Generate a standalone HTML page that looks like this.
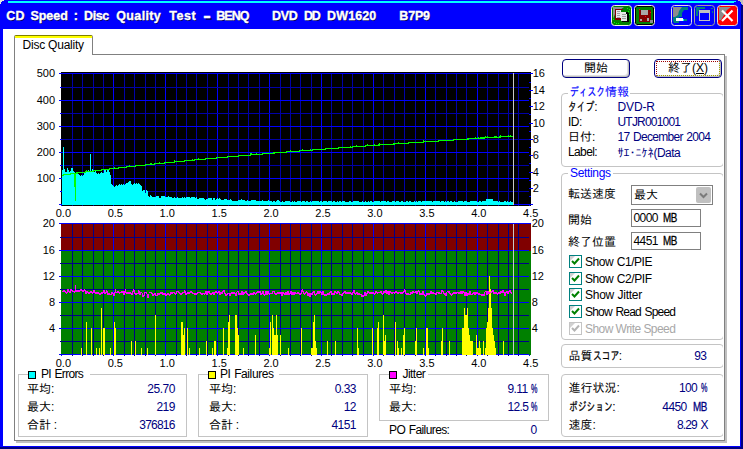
<!DOCTYPE html>
<html lang="ja"><head><meta charset="utf-8"><title>CD Speed : Disc Quality Test</title>
<style>
html,body{margin:0;padding:0}
body{width:743px;height:449px;position:relative;overflow:hidden;background:#fff;
 font-family:"Liberation Sans","IPAGothic","Noto Sans CJK JP",sans-serif;font-size:12px;color:#000;line-height:14px}
.t,.v{letter-spacing:-0.55px}
.j,.k,.h{letter-spacing:0}
.abs,.t,.ax,.tw,.box,.gb,.v,.l{position:absolute}
.t,.ax,.tw,.v,.l{white-space:nowrap}
.j{font-size:12px}
.k{font-size:12px;display:inline-block;transform:scaleX(.73);transform-origin:0 50%;-webkit-text-stroke:0.25px currentColor}
.ax{font-size:11px;line-height:14px;height:14px}
.r{text-align:right}
.c{text-align:center}
.tw{top:8px;color:#fff;font-weight:bold;font-size:12.5px;line-height:16px;text-shadow:1px 1px 0 #00006a;-webkit-text-stroke:0.35px #fff}
.gb{border:1px solid #c4c4c4;border-radius:4px;box-sizing:border-box}
.lg{position:absolute;background:#fff;line-height:14px;white-space:nowrap}
.v{color:#000080;text-align:right}
.bl{color:#00f}
.nv{color:#000080}

.btn{position:absolute;width:68px;height:19px;box-sizing:border-box;border:1px solid #000080;border-radius:4px;background:#fff;
 box-shadow:inset -1px -1px 0 #c0c0c0, inset -2px -2px 0 #e0e0e0;text-align:center;line-height:17px;white-space:nowrap}
.foc{position:absolute;left:1px;top:1px;right:1px;bottom:1px;border:1px dotted #a00000;border-bottom-color:#a0a000;border-right-color:#a0a000}
.ed{position:absolute;box-sizing:border-box;border:1px solid #808080;background:#fff}
.dd{position:absolute;width:15px;height:16px;background:#c0c0c0;border-radius:2px}
.cb{position:absolute;width:13px;height:13px;box-sizing:border-box;border:1px solid #008080;background:#fff}
.cb svg{display:block}
.n{display:inline-block;transform-origin:0 50%;-webkit-text-stroke:0.3px currentColor}
.h{font-family:"IPAGothic","Noto Sans CJK JP",sans-serif;font-size:12px}

</style></head><body>
<!-- window frame -->
<div class="abs" style="left:0;top:0;width:743px;height:29px;background:#00f"></div>
<div class="abs" style="left:8px;top:1px;width:728px;height:1px;background:#0ff"></div><div class="abs" style="left:8px;top:2px;width:726px;height:1px;background:#0ff"></div>
<div class="abs" style="left:0;top:0;width:3px;height:449px;background:#00f"></div>
<div class="abs" style="left:740px;top:0;width:3px;height:449px;background:#00f"></div>
<div class="abs" style="left:741px;top:5px;width:2px;height:444px;background:#000080"></div>
<div class="abs" style="left:0;top:446px;width:741px;height:1px;background:#00f"></div>
<div class="abs" style="left:0;top:447px;width:743px;height:2px;background:#000080"></div>
<svg class="abs" style="left:0;top:0" width="743" height="6" shape-rendering="crispEdges"><path d="M0 0h4v1h-2v1h-1v2h-1z" fill="#e8e8e0"/><path d="M738 0h5v5h-1v-1h-1v-2h-1v-1h-2z" fill="#c0c0c0"/></svg>
<div class="tw" style="left:0"><span style="margin-left:6.20px;letter-spacing:0.25px">CD</span> <span style="margin-left:2.28px;letter-spacing:-0.05px">Speed</span> <span style="margin-left:2.55px;letter-spacing:0.00px">:</span> <span style="margin-left:2.60px;letter-spacing:-0.40px">Disc</span> <span style="margin-left:3.93px;letter-spacing:0.35px">Quality</span> <span style="margin-left:4.67px;letter-spacing:0.54px">Test</span> <span style="margin-left:5.60px;letter-spacing:0.00px"><span style="display:inline-block;transform:scale(1.8,1.3)">-</span></span> <span style="margin-left:3.35px;letter-spacing:-0.97px">BENQ</span> <span style="margin-left:20.10px;letter-spacing:-0.40px">DVD</span> <span style="margin-left:3.32px;letter-spacing:-1.45px">DD</span> <span style="margin-left:4.38px;letter-spacing:0.11px">DW1620</span> <span style="margin-left:19.41px;letter-spacing:-0.16px">B7P9</span></div>
<svg class="abs" style="left:608px;top:3px" width="132" height="25" viewBox="0 0 132 25"><rect x="3.5" y="2.5" width="20" height="20" fill="#008000" rx="3" stroke="#f4f4e8" stroke-width="1"/><path d="M5 4h11l-4 3h-3l-2 4l-2 5z" fill="#909090"/><rect x="7" y="6" width="6" height="11" fill="#800000" /><rect x="8" y="7" width="5" height="8" fill="#e8e8e8" /><rect x="9" y="8" width="3" height="1" fill="#a0a0a0" /><rect x="9" y="10" width="3" height="1" fill="#a0a0a0" /><rect x="9" y="12" width="3" height="1" fill="#a0a0a0" /><rect x="9" y="14" width="3" height="1" fill="#a0a0a0" /><rect x="12" y="6" width="3" height="1" fill="#800000" /><rect x="14" y="10" width="7" height="9" fill="#000" /><rect x="13" y="9" width="6" height="9" fill="#e8e8e8" /><rect x="18" y="9" width="2" height="2" fill="#000" /><rect x="14" y="11" width="4" height="1" fill="#a0a0a0" /><rect x="14" y="13" width="4" height="1" fill="#a0a0a0" /><rect x="14" y="15" width="4" height="1" fill="#a0a0a0" /><rect x="19" y="5" width="1" height="1" fill="#00ff00" /><rect x="21" y="6" width="1" height="1" fill="#00ff00" /><rect x="20" y="8" width="1" height="1" fill="#00ff00" /><rect x="21" y="11" width="1" height="1" fill="#00ff00" /><rect x="5" y="16" width="1" height="1" fill="#00ff00" /><rect x="6" y="19" width="1" height="1" fill="#00ff00" /><rect x="8" y="20" width="1" height="1" fill="#00ff00" /><rect x="10" y="20" width="1" height="1" fill="#00ff00" /><rect x="26.5" y="2.5" width="20" height="20" fill="#000" rx="3" stroke="#f4f4e8" stroke-width="1"/><rect x="28" y="4" width="17" height="17" fill="#008000" rx="1"/><rect x="31" y="7" width="12" height="12" fill="#800000" /><rect x="33" y="7" width="7" height="5" fill="#a8a8a8" /><rect x="32" y="16" width="2" height="2" fill="#a8a8a8" /><rect x="39" y="15" width="2" height="3" fill="#a8a8a8" /><rect x="42" y="17" width="3" height="3" fill="#909090" /><rect x="31" y="6" width="1" height="1" fill="#ff0000" /><rect x="37" y="13" width="1" height="1" fill="#ff0000" /><rect x="42" y="9" width="1" height="1" fill="#ff0000" /><rect x="63.5" y="2.5" width="20" height="20" fill="#0000ff" rx="3" stroke="#e0e0e0" stroke-width="1"/><path d="M65 4h15v3h-4l-2 3v4h-3v6h-5l-1 -2z" fill="#008080"/><path d="M65 4h9l-3 4l-1 4l-3 2h-2z" fill="#8c8c8c"/><rect x="76" y="16" width="3" height="2" fill="#008080" /><rect x="68" y="15" width="7" height="3" fill="#ffffff" /><rect x="75" y="16" width="1" height="2" fill="#00ffff" /><rect x="86.5" y="2.5" width="20" height="20" fill="#0000ff" rx="3" stroke="#a0a0a0" stroke-width="1"/><path d="M88 4h9v2h-5l-2 3v4h-2z" fill="#008080"/><rect x="103" y="5" width="2" height="1" fill="#008080" /><rect x="104" y="8" width="1" height="2" fill="#008080" /><rect x="91" y="7" width="11" height="3" fill="#c0c0c0" /><rect x="91" y="7" width="1" height="11" fill="#c0c0c0" /><rect x="101" y="7" width="1" height="11" fill="#c0c0c0" /><rect x="91" y="17" width="11" height="1" fill="#c0c0c0" /><rect x="109.5" y="2.5" width="20" height="20" fill="#ff0000" rx="3" stroke="#e0e0e0" stroke-width="1"/><path d="M111 4h12l-4 3l-3 5l-3 5h-2z" fill="#8c8c8c"/><path d="M114 7.5l10.5 10.5M124.5 7.5l-10.5 10.5" stroke="#fff" stroke-width="2.2" fill="none"/></svg>
<!-- tab page -->
<div class="abs" style="left:14px;top:54px;width:711px;height:387px;border:1px solid #808080;box-sizing:border-box;box-shadow:2px 2px 0 #c0c0c0"></div>
<div class="abs" style="left:14px;top:35px;width:79px;height:20px;border:1px solid #808080;border-bottom:none;border-top:1px solid #808000;box-sizing:border-box;background:#fff;border-radius:2px 2px 0 0"></div>
<div class="abs" style="left:15px;top:36px;width:77px;height:2px;background:#ff0"></div>
<div class="t" style="left:22.5px;top:38px;letter-spacing:-0.22px">Disc Quality</div>
<svg class="abs" style="left:0;top:0" width="743" height="449" shape-rendering="crispEdges"><rect x="61" y="72" width="470" height="134" fill="#000"/><rect x="72" y="73" width="1" height="132" fill="#0000a8"/><rect x="82" y="73" width="1" height="132" fill="#0000a8"/><rect x="93" y="73" width="1" height="132" fill="#0000a8"/><rect x="103" y="73" width="1" height="132" fill="#0000a8"/><rect x="113" y="73" width="1" height="132" fill="#00f"/><rect x="124" y="73" width="1" height="132" fill="#0000a8"/><rect x="134" y="73" width="1" height="132" fill="#0000a8"/><rect x="145" y="73" width="1" height="132" fill="#0000a8"/><rect x="155" y="73" width="1" height="132" fill="#0000a8"/><rect x="165" y="73" width="1" height="132" fill="#00f"/><rect x="176" y="73" width="1" height="132" fill="#0000a8"/><rect x="186" y="73" width="1" height="132" fill="#0000a8"/><rect x="196" y="73" width="1" height="132" fill="#0000a8"/><rect x="207" y="73" width="1" height="132" fill="#0000a8"/><rect x="217" y="73" width="1" height="132" fill="#00f"/><rect x="228" y="73" width="1" height="132" fill="#0000a8"/><rect x="238" y="73" width="1" height="132" fill="#0000a8"/><rect x="248" y="73" width="1" height="132" fill="#0000a8"/><rect x="259" y="73" width="1" height="132" fill="#0000a8"/><rect x="269" y="73" width="1" height="132" fill="#00f"/><rect x="280" y="73" width="1" height="132" fill="#0000a8"/><rect x="290" y="73" width="1" height="132" fill="#0000a8"/><rect x="300" y="73" width="1" height="132" fill="#0000a8"/><rect x="311" y="73" width="1" height="132" fill="#0000a8"/><rect x="321" y="73" width="1" height="132" fill="#00f"/><rect x="331" y="73" width="1" height="132" fill="#0000a8"/><rect x="342" y="73" width="1" height="132" fill="#0000a8"/><rect x="352" y="73" width="1" height="132" fill="#0000a8"/><rect x="363" y="73" width="1" height="132" fill="#0000a8"/><rect x="373" y="73" width="1" height="132" fill="#00f"/><rect x="383" y="73" width="1" height="132" fill="#0000a8"/><rect x="394" y="73" width="1" height="132" fill="#0000a8"/><rect x="404" y="73" width="1" height="132" fill="#0000a8"/><rect x="415" y="73" width="1" height="132" fill="#0000a8"/><rect x="425" y="73" width="1" height="132" fill="#00f"/><rect x="435" y="73" width="1" height="132" fill="#0000a8"/><rect x="446" y="73" width="1" height="132" fill="#0000a8"/><rect x="456" y="73" width="1" height="132" fill="#0000a8"/><rect x="466" y="73" width="1" height="132" fill="#0000a8"/><rect x="477" y="73" width="1" height="132" fill="#00f"/><rect x="487" y="73" width="1" height="132" fill="#0000a8"/><rect x="498" y="73" width="1" height="132" fill="#0000a8"/><rect x="508" y="73" width="1" height="132" fill="#0000a8"/><rect x="518" y="73" width="1" height="132" fill="#0000a8"/><rect x="62" y="73" width="469" height="1" fill="#00f"/><rect x="62" y="87" width="467" height="1" fill="#0000a8"/><rect x="62" y="100" width="467" height="1" fill="#00f"/><rect x="62" y="113" width="467" height="1" fill="#0000a8"/><rect x="62" y="126" width="467" height="1" fill="#00f"/><rect x="62" y="139" width="467" height="1" fill="#0000a8"/><rect x="62" y="152" width="467" height="1" fill="#00f"/><rect x="62" y="165" width="467" height="1" fill="#0000a8"/><rect x="62" y="178" width="467" height="1" fill="#00f"/><rect x="62" y="191" width="467" height="1" fill="#0000a8"/><rect x="62" y="204" width="469" height="1" fill="#00f"/><path d="M62 205V170H63V147H64V169H65V172H66V172H67V168H68V170H69V172H70V171H71V168H72V168H73V171H74V172H75V173H76V173H77V174H78V174H79V175H80V176H81V175H82V176H83V175H84V172H85V172H86V170H87V171H88V170H89V171H90V154H91V171H92V169H93V172H94V172H95V171H96V173H97V174H98V173H99V174H100V173H101V172H102V173H103V173H104V170H105V170H106V172H107V170H108V170H109V172H110V175H111V184H112V185H113V186H114V187H115V186H116V185H117V186H118V185H119V184H120V185H121V184H122V185H123V184H124V185H125V184H126V183H127V183H128V182H129V181H130V181H131V184H132V185H133V184H134V183H135V184H136V183H137V184H138V183H139V184H140V185H141V186H142V191H143V190H144V190H145V193H146V190H147V191H148V196H149V197H150V195H151V196H152V197H153V197H154V197H155V197H156V196H157V196H158V196H159V198H160V198H161V196H162V196H163V196H164V196H165V197H166V197H167V197H168V196H169V197H170V197H171V197H172V198H173V198H174V197H175V198H176V198H177V197H178V198H179V198H180V198H181V198H182V197H183V198H184V197H185V198H186V197H187V197H188V197H189V197H190V198H191V197H192V197H193V197H194V197H195V198H196V197H197V199H198V199H199V198H200V198H201V198H202V198H203V198H204V199H205V200H206V199H207V199H208V198H209V198H210V198H211V198H212V200H213V198H214V198H215V200H216V199H217V198H218V199H219V198H220V199H221V200H222V200H223V200H224V199H225V199H226V199H227V200H228V200H229V200H230V199H231V200H232V201H233V201H234V201H235V201H236V201H237V201H238V200H239V200H240V200H241V199H242V200H243V200H244V200H245V201H246V201H247V200H248V201H249V201H250V201H251V200H252V200H253V200H254V200H255V200H256V201H257V201H258V201H259V201H260V201H261V201H262V200H263V201H264V201H265V201H266V201H267V201H268V200H269V201H270V201H271V201H272V202H273V201H274V201H275V202H276V201H277V200H278V200H279V201H280V202H281V202H282V201H283V202H284V202H285V201H286V201H287V201H288V201H289V201H290V202H291V202H292V201H293V202H294V201H295V202H296V202H297V201H298V201H299V201H300V201H301V202H302V201H303V201H304V201H305V202H306V201H307V201H308V202H309V202H310V201H311V202H312V201H313V201H314V201H315V201H316V201H317V201H318V201H319V202H320V201H321V201H322V202H323V201H324V201H325V201H326V201H327V202H328V201H329V201H330V201H331V201H332V202H333V201H334V201H335V202H336V202H337V201H338V202H339V201H340V201H341V202H342V201H343V201H344V201H345V202H346V202H347V202H348V202H349V201H350V201H351V202H352V202H353V201H354V201H355V201H356V201H357V201H358V201H359V202H360V202H361V202H362V201H363V202H364V202H365V201H366V202H367V202H368V201H369V202H370V201H371V201H372V202H373V202H374V201H375V201H376V201H377V201H378V201H379V201H380V202H381V201H382V201H383V201H384V201H385V201H386V202H387V201H388V201H389V202H390V202H391V202H392V201H393V201H394V201H395V202H396V201H397V201H398V201H399V202H400V202H401V201H402V201H403V202H404V202H405V202H406V201H407V201H408V202H409V201H410V201H411V202H412V202H413V202H414V201H415V202H416V201H417V202H418V201H419V201H420V201H421V202H422V201H423V201H424V201H425V201H426V201H427V201H428V201H429V201H430V201H431V201H432V202H433V201H434V201H435V201H436V201H437V201H438V201H439V201H440V202H441V201H442V201H443V201H444V202H445V201H446V202H447V201H448V201H449V202H450V201H451V201H452V202H453V202H454V201H455V202H456V202H457V202H458V201H459V201H460V201H461V201H462V201H463V202H464V201H465V201H466V201H467V202H468V202H469V202H470V201H471V201H472V201H473V201H474V201H475V201H476V201H477V202H478V202H479V201H480V201H481V202H482V201H483V201H484V201H485V201H486V199H487V199H488V199H489V199H490V199H491V199H492V199H493V201H494V201H495V201H496V201H497V201H498V202H499V201H500V202H501V202H502V202H503V202H504V201H505V201H506V202H507V201H508V202H509V202H510V201H511V202H512V202H513V205Z" fill="#0ff"/><rect x="59" y="73" width="3" height="1" fill="#00f"/><rect x="60" y="87" width="2" height="1" fill="#00f"/><rect x="59" y="100" width="3" height="1" fill="#00f"/><rect x="60" y="113" width="2" height="1" fill="#00f"/><rect x="59" y="126" width="3" height="1" fill="#00f"/><rect x="60" y="139" width="2" height="1" fill="#00f"/><rect x="59" y="152" width="3" height="1" fill="#00f"/><rect x="60" y="165" width="2" height="1" fill="#00f"/><rect x="59" y="178" width="3" height="1" fill="#00f"/><rect x="60" y="191" width="2" height="1" fill="#00f"/><rect x="59" y="204" width="3" height="1" fill="#00f"/><rect x="529" y="73" width="4" height="1" fill="#00f"/><rect x="529" y="82" width="2" height="1" fill="#00f"/><rect x="529" y="90" width="4" height="1" fill="#00f"/><rect x="529" y="98" width="2" height="1" fill="#00f"/><rect x="529" y="106" width="4" height="1" fill="#00f"/><rect x="529" y="114" width="2" height="1" fill="#00f"/><rect x="529" y="123" width="4" height="1" fill="#00f"/><rect x="529" y="131" width="2" height="1" fill="#00f"/><rect x="529" y="139" width="4" height="1" fill="#00f"/><rect x="529" y="147" width="2" height="1" fill="#00f"/><rect x="529" y="155" width="4" height="1" fill="#00f"/><rect x="529" y="163" width="2" height="1" fill="#00f"/><rect x="529" y="172" width="4" height="1" fill="#00f"/><rect x="529" y="180" width="2" height="1" fill="#00f"/><rect x="529" y="188" width="4" height="1" fill="#00f"/><rect x="529" y="196" width="2" height="1" fill="#00f"/><rect x="529" y="204" width="4" height="1" fill="#00f"/><rect x="61" y="205" width="1" height="1" fill="#00f"/><rect x="72" y="205" width="1" height="1" fill="#0000a8"/><rect x="82" y="205" width="1" height="1" fill="#0000a8"/><rect x="93" y="205" width="1" height="1" fill="#0000a8"/><rect x="103" y="205" width="1" height="1" fill="#0000a8"/><rect x="113" y="205" width="1" height="1" fill="#00f"/><rect x="124" y="205" width="1" height="1" fill="#0000a8"/><rect x="134" y="205" width="1" height="1" fill="#0000a8"/><rect x="145" y="205" width="1" height="1" fill="#0000a8"/><rect x="155" y="205" width="1" height="1" fill="#0000a8"/><rect x="165" y="205" width="1" height="1" fill="#00f"/><rect x="176" y="205" width="1" height="1" fill="#0000a8"/><rect x="186" y="205" width="1" height="1" fill="#0000a8"/><rect x="196" y="205" width="1" height="1" fill="#0000a8"/><rect x="207" y="205" width="1" height="1" fill="#0000a8"/><rect x="217" y="205" width="1" height="1" fill="#00f"/><rect x="228" y="205" width="1" height="1" fill="#0000a8"/><rect x="238" y="205" width="1" height="1" fill="#0000a8"/><rect x="248" y="205" width="1" height="1" fill="#0000a8"/><rect x="259" y="205" width="1" height="1" fill="#0000a8"/><rect x="269" y="205" width="1" height="1" fill="#00f"/><rect x="280" y="205" width="1" height="1" fill="#0000a8"/><rect x="290" y="205" width="1" height="1" fill="#0000a8"/><rect x="300" y="205" width="1" height="1" fill="#0000a8"/><rect x="311" y="205" width="1" height="1" fill="#0000a8"/><rect x="321" y="205" width="1" height="1" fill="#00f"/><rect x="331" y="205" width="1" height="1" fill="#0000a8"/><rect x="342" y="205" width="1" height="1" fill="#0000a8"/><rect x="352" y="205" width="1" height="1" fill="#0000a8"/><rect x="363" y="205" width="1" height="1" fill="#0000a8"/><rect x="373" y="205" width="1" height="1" fill="#00f"/><rect x="383" y="205" width="1" height="1" fill="#0000a8"/><rect x="394" y="205" width="1" height="1" fill="#0000a8"/><rect x="404" y="205" width="1" height="1" fill="#0000a8"/><rect x="415" y="205" width="1" height="1" fill="#0000a8"/><rect x="425" y="205" width="1" height="1" fill="#00f"/><rect x="435" y="205" width="1" height="1" fill="#0000a8"/><rect x="446" y="205" width="1" height="1" fill="#0000a8"/><rect x="456" y="205" width="1" height="1" fill="#0000a8"/><rect x="466" y="205" width="1" height="1" fill="#0000a8"/><rect x="477" y="205" width="1" height="1" fill="#00f"/><rect x="487" y="205" width="1" height="1" fill="#0000a8"/><rect x="498" y="205" width="1" height="1" fill="#0000a8"/><rect x="508" y="205" width="1" height="1" fill="#0000a8"/><rect x="518" y="205" width="1" height="1" fill="#0000a8"/><rect x="529" y="205" width="1" height="1" fill="#00f"/><path d="M62 175h1v1h-1zM63 174h1v2h-1zM64 174h1v1h-1zM65 174h1v1h-1zM66 174h1v1h-1zM67 174h1v1h-1zM68 174h1v1h-1zM69 174h1v1h-1zM70 173h1v2h-1zM71 173h1v1h-1zM72 173h1v1h-1zM73 173h1v1h-1zM74 173h1v1h-1zM75 173h1v1h-1zM76 172h1v2h-1zM77 172h1v2h-1zM78 172h1v1h-1zM79 172h1v1h-1zM80 172h1v1h-1zM81 172h1v1h-1zM82 172h1v1h-1zM83 172h1v1h-1zM84 172h1v1h-1zM85 171h1v2h-1zM86 170h1v2h-1zM87 171h1v1h-1zM88 171h1v1h-1zM89 171h1v1h-1zM90 171h1v1h-1zM91 171h1v1h-1zM92 171h1v1h-1zM93 170h1v2h-1zM94 170h1v1h-1zM95 170h1v1h-1zM96 170h1v1h-1zM97 170h1v1h-1zM98 170h1v1h-1zM99 170h1v1h-1zM100 170h1v1h-1zM101 169h1v2h-1zM102 169h1v1h-1zM103 169h1v1h-1zM104 169h1v1h-1zM105 169h1v1h-1zM106 169h1v1h-1zM107 169h1v1h-1zM108 169h1v1h-1zM109 168h1v2h-1zM110 168h1v1h-1zM111 168h1v1h-1zM112 168h1v1h-1zM113 168h1v1h-1zM114 167h1v2h-1zM115 168h1v1h-1zM116 168h1v1h-1zM117 168h1v1h-1zM118 167h1v2h-1zM119 167h1v1h-1zM120 167h1v1h-1zM121 167h1v1h-1zM122 167h1v1h-1zM123 167h1v1h-1zM124 167h1v1h-1zM125 167h1v1h-1zM126 166h1v2h-1zM127 166h1v1h-1zM128 166h1v1h-1zM129 165h1v2h-1zM130 166h1v1h-1zM131 166h1v1h-1zM132 166h1v1h-1zM133 166h1v1h-1zM134 166h1v1h-1zM135 165h1v2h-1zM136 165h1v1h-1zM137 165h1v1h-1zM138 165h1v1h-1zM139 165h1v1h-1zM140 165h1v1h-1zM141 165h1v1h-1zM142 165h1v1h-1zM143 165h1v1h-1zM144 165h1v1h-1zM145 164h1v2h-1zM146 164h1v1h-1zM147 164h1v1h-1zM148 164h1v1h-1zM149 164h1v1h-1zM150 163h1v2h-1zM151 163h1v2h-1zM152 164h1v1h-1zM153 164h1v1h-1zM154 163h1v2h-1zM155 163h1v1h-1zM156 163h1v1h-1zM157 163h1v1h-1zM158 163h1v1h-1zM159 162h1v2h-1zM160 163h1v1h-1zM161 163h1v1h-1zM162 163h1v1h-1zM163 163h1v1h-1zM164 162h1v2h-1zM165 162h1v1h-1zM166 162h1v1h-1zM167 162h1v1h-1zM168 162h1v1h-1zM169 162h1v1h-1zM170 162h1v1h-1zM171 162h1v1h-1zM172 162h1v1h-1zM173 162h1v1h-1zM174 160h1v3h-1zM175 161h1v1h-1zM176 161h1v1h-1zM177 161h1v1h-1zM178 161h1v1h-1zM179 161h1v1h-1zM180 161h1v1h-1zM181 161h1v1h-1zM182 161h1v1h-1zM183 161h1v1h-1zM184 160h1v2h-1zM185 160h1v1h-1zM186 160h1v1h-1zM187 160h1v1h-1zM188 160h1v1h-1zM189 160h1v1h-1zM190 160h1v1h-1zM191 160h1v1h-1zM192 159h1v2h-1zM193 160h1v1h-1zM194 159h1v2h-1zM195 159h1v1h-1zM196 159h1v1h-1zM197 159h1v1h-1zM198 158h1v2h-1zM199 159h1v1h-1zM200 159h1v1h-1zM201 159h1v1h-1zM202 159h1v1h-1zM203 159h1v1h-1zM204 159h1v1h-1zM205 158h1v2h-1zM206 158h1v1h-1zM207 158h1v1h-1zM208 158h1v1h-1zM209 158h1v1h-1zM210 158h1v1h-1zM211 158h1v1h-1zM212 158h1v1h-1zM213 158h1v1h-1zM214 158h1v1h-1zM215 158h1v1h-1zM216 157h1v2h-1zM217 157h1v1h-1zM218 157h1v1h-1zM219 157h1v1h-1zM220 157h1v1h-1zM221 157h1v1h-1zM222 157h1v1h-1zM223 157h1v1h-1zM224 157h1v1h-1zM225 157h1v1h-1zM226 157h1v1h-1zM227 156h1v2h-1zM228 156h1v1h-1zM229 156h1v1h-1zM230 156h1v1h-1zM231 156h1v1h-1zM232 156h1v1h-1zM233 156h1v1h-1zM234 156h1v1h-1zM235 156h1v1h-1zM236 156h1v1h-1zM237 156h1v1h-1zM238 155h1v2h-1zM239 155h1v1h-1zM240 155h1v1h-1zM241 155h1v1h-1zM242 155h1v1h-1zM243 155h1v1h-1zM244 155h1v1h-1zM245 155h1v1h-1zM246 155h1v1h-1zM247 155h1v1h-1zM248 155h1v1h-1zM249 155h1v1h-1zM250 153h1v3h-1zM251 153h1v2h-1zM252 154h1v1h-1zM253 154h1v1h-1zM254 154h1v1h-1zM255 154h1v1h-1zM256 153h1v2h-1zM257 154h1v1h-1zM258 154h1v1h-1zM259 154h1v1h-1zM260 154h1v1h-1zM261 154h1v1h-1zM262 153h1v2h-1zM263 153h1v1h-1zM264 153h1v1h-1zM265 153h1v1h-1zM266 153h1v1h-1zM267 153h1v1h-1zM268 153h1v1h-1zM269 153h1v1h-1zM270 153h1v1h-1zM271 153h1v1h-1zM272 153h1v1h-1zM273 152h1v2h-1zM274 152h1v2h-1zM275 152h1v1h-1zM276 152h1v1h-1zM277 152h1v1h-1zM278 152h1v1h-1zM279 152h1v1h-1zM280 152h1v1h-1zM281 152h1v1h-1zM282 152h1v1h-1zM283 152h1v1h-1zM284 152h1v1h-1zM285 152h1v1h-1zM286 151h1v2h-1zM287 151h1v1h-1zM288 151h1v1h-1zM289 151h1v1h-1zM290 150h1v2h-1zM291 151h1v1h-1zM292 151h1v1h-1zM293 151h1v1h-1zM294 151h1v1h-1zM295 151h1v1h-1zM296 151h1v1h-1zM297 151h1v1h-1zM298 151h1v1h-1zM299 150h1v2h-1zM300 150h1v1h-1zM301 150h1v1h-1zM302 149h1v2h-1zM303 150h1v1h-1zM304 150h1v1h-1zM305 150h1v1h-1zM306 150h1v1h-1zM307 150h1v1h-1zM308 150h1v1h-1zM309 150h1v1h-1zM310 149h1v2h-1zM311 150h1v1h-1zM312 149h1v2h-1zM313 149h1v1h-1zM314 149h1v1h-1zM315 149h1v1h-1zM316 149h1v1h-1zM317 149h1v1h-1zM318 149h1v1h-1zM319 149h1v1h-1zM320 149h1v1h-1zM321 149h1v1h-1zM322 149h1v1h-1zM323 149h1v1h-1zM324 149h1v1h-1zM325 148h1v2h-1zM326 148h1v1h-1zM327 148h1v1h-1zM328 148h1v1h-1zM329 148h1v1h-1zM330 148h1v1h-1zM331 148h1v1h-1zM332 148h1v1h-1zM333 148h1v1h-1zM334 148h1v1h-1zM335 148h1v1h-1zM336 148h1v1h-1zM337 148h1v1h-1zM338 147h1v2h-1zM339 147h1v1h-1zM340 147h1v1h-1zM341 147h1v1h-1zM342 147h1v1h-1zM343 147h1v1h-1zM344 147h1v1h-1zM345 147h1v1h-1zM346 147h1v1h-1zM347 147h1v1h-1zM348 147h1v1h-1zM349 147h1v1h-1zM350 146h1v2h-1zM351 147h1v1h-1zM352 146h1v2h-1zM353 146h1v1h-1zM354 146h1v1h-1zM355 146h1v1h-1zM356 145h1v2h-1zM357 146h1v1h-1zM358 146h1v1h-1zM359 146h1v1h-1zM360 146h1v1h-1zM361 146h1v1h-1zM362 146h1v1h-1zM363 146h1v1h-1zM364 146h1v1h-1zM365 145h1v2h-1zM366 145h1v1h-1zM367 144h1v2h-1zM368 145h1v1h-1zM369 145h1v1h-1zM370 145h1v1h-1zM371 145h1v1h-1zM372 145h1v1h-1zM373 145h1v1h-1zM374 144h1v2h-1zM375 145h1v1h-1zM376 145h1v1h-1zM377 145h1v1h-1zM378 144h1v2h-1zM379 143h1v3h-1zM380 144h1v1h-1zM381 144h1v1h-1zM382 144h1v1h-1zM383 144h1v1h-1zM384 144h1v1h-1zM385 144h1v1h-1zM386 144h1v1h-1zM387 144h1v1h-1zM388 144h1v1h-1zM389 144h1v1h-1zM390 144h1v1h-1zM391 144h1v1h-1zM392 144h1v1h-1zM393 143h1v2h-1zM394 143h1v2h-1zM395 143h1v1h-1zM396 143h1v1h-1zM397 143h1v1h-1zM398 142h1v2h-1zM399 143h1v1h-1zM400 143h1v1h-1zM401 143h1v1h-1zM402 143h1v1h-1zM403 143h1v1h-1zM404 143h1v1h-1zM405 143h1v1h-1zM406 143h1v1h-1zM407 143h1v1h-1zM408 142h1v2h-1zM409 142h1v1h-1zM410 142h1v1h-1zM411 142h1v1h-1zM412 142h1v1h-1zM413 142h1v1h-1zM414 142h1v1h-1zM415 142h1v1h-1zM416 142h1v1h-1zM417 142h1v1h-1zM418 142h1v1h-1zM419 142h1v1h-1zM420 142h1v1h-1zM421 142h1v1h-1zM422 142h1v1h-1zM423 140h1v3h-1zM424 141h1v1h-1zM425 141h1v1h-1zM426 141h1v1h-1zM427 141h1v1h-1zM428 141h1v1h-1zM429 141h1v1h-1zM430 141h1v1h-1zM431 141h1v1h-1zM432 141h1v1h-1zM433 141h1v1h-1zM434 141h1v1h-1zM435 141h1v1h-1zM436 141h1v1h-1zM437 141h1v1h-1zM438 140h1v2h-1zM439 140h1v1h-1zM440 140h1v1h-1zM441 140h1v1h-1zM442 140h1v1h-1zM443 140h1v1h-1zM444 140h1v1h-1zM445 140h1v1h-1zM446 140h1v1h-1zM447 140h1v1h-1zM448 140h1v1h-1zM449 140h1v1h-1zM450 140h1v1h-1zM451 140h1v1h-1zM452 140h1v1h-1zM453 139h1v2h-1zM454 139h1v1h-1zM455 139h1v1h-1zM456 139h1v1h-1zM457 139h1v1h-1zM458 139h1v1h-1zM459 139h1v1h-1zM460 139h1v1h-1zM461 139h1v1h-1zM462 139h1v1h-1zM463 139h1v1h-1zM464 139h1v1h-1zM465 139h1v1h-1zM466 139h1v1h-1zM467 138h1v2h-1zM468 138h1v2h-1zM469 138h1v1h-1zM470 138h1v1h-1zM471 138h1v1h-1zM472 138h1v1h-1zM473 138h1v1h-1zM474 138h1v1h-1zM475 137h1v2h-1zM476 138h1v1h-1zM477 138h1v1h-1zM478 137h1v2h-1zM479 138h1v1h-1zM480 137h1v2h-1zM481 137h1v2h-1zM482 137h1v2h-1zM483 137h1v2h-1zM484 137h1v2h-1zM485 136h1v2h-1zM486 137h1v1h-1zM487 136h1v2h-1zM488 137h1v1h-1zM489 137h1v1h-1zM490 137h1v1h-1zM491 137h1v1h-1zM492 137h1v1h-1zM493 137h1v1h-1zM494 136h1v2h-1zM495 136h1v2h-1zM496 136h1v2h-1zM497 137h1v1h-1zM498 137h1v1h-1zM499 136h1v2h-1zM500 135h1v3h-1zM501 136h1v1h-1zM502 136h1v1h-1zM503 136h1v1h-1zM504 136h1v1h-1zM505 136h1v1h-1zM506 136h1v1h-1zM507 136h1v1h-1zM508 135h1v2h-1zM509 136h1v1h-1zM510 135h1v2h-1zM511 136h1v1h-1zM512 136h1v1h-1z" fill="#0f0"/><rect x="74" y="174" width="2" height="13" fill="#0f0"/><rect x="75" y="187" width="1" height="14" fill="#0f0"/><rect x="513" y="73" width="1" height="132" fill="#c8c8c8"/><rect x="61" y="224" width="470" height="27" fill="#800000"/><rect x="61" y="251" width="470" height="104" fill="#008000"/><rect x="72" y="224" width="1" height="131" fill="#000088"/><rect x="82" y="224" width="1" height="131" fill="#000088"/><rect x="93" y="224" width="1" height="131" fill="#000088"/><rect x="103" y="224" width="1" height="131" fill="#000088"/><rect x="113" y="224" width="1" height="131" fill="#00f"/><rect x="124" y="224" width="1" height="131" fill="#000088"/><rect x="134" y="224" width="1" height="131" fill="#000088"/><rect x="145" y="224" width="1" height="131" fill="#000088"/><rect x="155" y="224" width="1" height="131" fill="#000088"/><rect x="165" y="224" width="1" height="131" fill="#00f"/><rect x="176" y="224" width="1" height="131" fill="#000088"/><rect x="186" y="224" width="1" height="131" fill="#000088"/><rect x="196" y="224" width="1" height="131" fill="#000088"/><rect x="207" y="224" width="1" height="131" fill="#000088"/><rect x="217" y="224" width="1" height="131" fill="#00f"/><rect x="228" y="224" width="1" height="131" fill="#000088"/><rect x="238" y="224" width="1" height="131" fill="#000088"/><rect x="248" y="224" width="1" height="131" fill="#000088"/><rect x="259" y="224" width="1" height="131" fill="#000088"/><rect x="269" y="224" width="1" height="131" fill="#00f"/><rect x="280" y="224" width="1" height="131" fill="#000088"/><rect x="290" y="224" width="1" height="131" fill="#000088"/><rect x="300" y="224" width="1" height="131" fill="#000088"/><rect x="311" y="224" width="1" height="131" fill="#000088"/><rect x="321" y="224" width="1" height="131" fill="#00f"/><rect x="331" y="224" width="1" height="131" fill="#000088"/><rect x="342" y="224" width="1" height="131" fill="#000088"/><rect x="352" y="224" width="1" height="131" fill="#000088"/><rect x="363" y="224" width="1" height="131" fill="#000088"/><rect x="373" y="224" width="1" height="131" fill="#00f"/><rect x="383" y="224" width="1" height="131" fill="#000088"/><rect x="394" y="224" width="1" height="131" fill="#000088"/><rect x="404" y="224" width="1" height="131" fill="#000088"/><rect x="415" y="224" width="1" height="131" fill="#000088"/><rect x="425" y="224" width="1" height="131" fill="#00f"/><rect x="435" y="224" width="1" height="131" fill="#000088"/><rect x="446" y="224" width="1" height="131" fill="#000088"/><rect x="456" y="224" width="1" height="131" fill="#000088"/><rect x="466" y="224" width="1" height="131" fill="#000088"/><rect x="477" y="224" width="1" height="131" fill="#00f"/><rect x="487" y="224" width="1" height="131" fill="#000088"/><rect x="498" y="224" width="1" height="131" fill="#000088"/><rect x="508" y="224" width="1" height="131" fill="#000088"/><rect x="518" y="224" width="1" height="131" fill="#000088"/><rect x="59" y="223" width="472" height="1" fill="#00f"/><rect x="60" y="237" width="469" height="1" fill="#000088"/><rect x="59" y="250" width="470" height="1" fill="#00f"/><rect x="60" y="263" width="469" height="1" fill="#000088"/><rect x="59" y="276" width="470" height="1" fill="#00f"/><rect x="60" y="289" width="469" height="1" fill="#000088"/><rect x="59" y="302" width="470" height="1" fill="#00f"/><rect x="60" y="315" width="469" height="1" fill="#000088"/><rect x="59" y="328" width="470" height="1" fill="#00f"/><rect x="60" y="341" width="469" height="1" fill="#000088"/><rect x="59" y="354" width="470" height="1" fill="#00f"/><path d="M81 348h1v7h-1zM86 322h1v33h-1zM91 328h1v27h-1zM96 348h1v7h-1zM99 348h1v7h-1zM101 308h1v47h-1zM103 328h1v27h-1zM104 328h1v27h-1zM110 348h1v7h-1zM114 322h1v33h-1zM115 328h1v27h-1zM131 341h1v14h-1zM135 341h1v14h-1zM141 348h1v7h-1zM147 348h1v7h-1zM155 315h1v40h-1zM181 322h1v33h-1zM182 322h1v33h-1zM183 335h1v20h-1zM184 328h1v27h-1zM187 328h1v27h-1zM189 348h1v7h-1zM199 348h1v7h-1zM206 341h1v14h-1zM212 348h1v7h-1zM214 341h1v14h-1zM215 341h1v14h-1zM223 328h1v27h-1zM227 348h1v7h-1zM228 322h1v33h-1zM229 315h1v40h-1zM235 315h1v40h-1zM236 315h1v40h-1zM237 328h1v27h-1zM238 335h1v20h-1zM243 348h1v7h-1zM255 335h1v20h-1zM269 348h1v7h-1zM270 322h1v33h-1zM272 315h1v40h-1zM273 328h1v27h-1zM274 335h1v20h-1zM275 335h1v20h-1zM276 315h1v40h-1zM277 335h1v20h-1zM280 335h1v20h-1zM288 348h1v7h-1zM301 328h1v27h-1zM311 348h1v7h-1zM312 348h1v7h-1zM313 322h1v33h-1zM314 315h1v40h-1zM315 341h1v14h-1zM316 348h1v7h-1zM327 341h1v14h-1zM335 341h1v14h-1zM357 328h1v27h-1zM358 348h1v7h-1zM372 328h1v27h-1zM377 328h1v27h-1zM378 322h1v33h-1zM383 315h1v40h-1zM384 341h1v14h-1zM385 335h1v20h-1zM395 322h1v33h-1zM397 341h1v14h-1zM398 348h1v7h-1zM401 348h1v7h-1zM403 335h1v20h-1zM404 328h1v27h-1zM415 341h1v14h-1zM416 328h1v27h-1zM423 348h1v7h-1zM426 328h1v27h-1zM427 328h1v27h-1zM428 348h1v7h-1zM441 341h1v14h-1zM442 328h1v27h-1zM449 341h1v14h-1zM462 328h1v27h-1zM463 328h1v27h-1zM464 308h1v47h-1zM465 315h1v40h-1zM466 315h1v40h-1zM467 308h1v47h-1zM468 328h1v27h-1zM469 335h1v20h-1zM470 341h1v14h-1zM471 341h1v14h-1zM472 341h1v14h-1zM476 335h1v20h-1zM477 348h1v7h-1zM478 348h1v7h-1zM479 341h1v14h-1zM480 348h1v7h-1zM483 341h1v14h-1zM485 348h1v7h-1zM486 328h1v27h-1zM487 322h1v33h-1zM488 308h1v47h-1zM489 276h1v79h-1zM490 289h1v66h-1zM491 308h1v47h-1zM492 328h1v27h-1zM493 335h1v20h-1zM494 341h1v14h-1zM495 348h1v7h-1zM503 341h1v14h-1z" fill="#ff0"/><path d="M62 291h1v1h-1zM63 290h1v2h-1zM64 290h1v2h-1zM65 291h1v2h-1zM66 292h1v2h-1zM67 289h1v4h-1zM68 289h1v3h-1zM69 291h1v2h-1zM70 289h1v4h-1zM71 289h1v2h-1zM72 290h1v2h-1zM73 291h1v1h-1zM74 291h1v2h-1zM75 290h1v2h-1zM76 290h1v2h-1zM77 290h1v2h-1zM78 290h1v2h-1zM79 290h1v2h-1zM80 289h1v2h-1zM81 289h1v2h-1zM82 290h1v2h-1zM83 290h1v2h-1zM84 289h1v2h-1zM85 290h1v4h-1zM86 291h1v3h-1zM87 291h1v2h-1zM88 292h1v2h-1zM89 292h1v2h-1zM90 291h1v2h-1zM91 291h1v2h-1zM92 292h1v2h-1zM93 290h1v3h-1zM94 290h1v3h-1zM95 292h1v2h-1zM96 292h1v2h-1zM97 292h1v2h-1zM98 292h1v2h-1zM99 293h1v2h-1zM100 293h1v2h-1zM101 292h1v2h-1zM102 292h1v2h-1zM103 290h1v3h-1zM104 290h1v4h-1zM105 292h1v2h-1zM106 290h1v3h-1zM107 291h1v4h-1zM108 293h1v2h-1zM109 293h1v2h-1zM110 294h1v1h-1zM111 292h1v3h-1zM112 292h1v2h-1zM113 293h1v3h-1zM114 292h1v4h-1zM115 289h1v4h-1zM116 292h1v1h-1zM117 291h1v2h-1zM118 291h1v2h-1zM119 292h1v2h-1zM120 292h1v1h-1zM121 291h1v2h-1zM122 291h1v2h-1zM123 291h1v4h-1zM124 291h1v4h-1zM125 289h1v4h-1zM126 292h1v2h-1zM127 292h1v2h-1zM128 292h1v2h-1zM129 292h1v2h-1zM130 292h1v2h-1zM131 293h1v2h-1zM132 291h1v4h-1zM133 289h1v3h-1zM134 290h1v4h-1zM135 293h1v2h-1zM136 293h1v2h-1zM137 293h1v1h-1zM138 290h1v4h-1zM139 291h1v4h-1zM140 292h1v3h-1zM141 292h1v1h-1zM142 293h1v4h-1zM143 295h1v2h-1zM144 292h1v4h-1zM145 292h1v1h-1zM146 292h1v2h-1zM147 294h1v4h-1zM148 294h1v4h-1zM149 292h1v1h-1zM150 292h1v1h-1zM151 292h1v2h-1zM152 293h1v3h-1zM153 294h1v2h-1zM154 293h1v2h-1zM155 293h1v3h-1zM156 295h1v1h-1zM157 293h1v3h-1zM158 293h1v2h-1zM159 293h1v2h-1zM160 292h1v2h-1zM161 292h1v2h-1zM162 292h1v3h-1zM163 293h1v2h-1zM164 293h1v2h-1zM165 293h1v3h-1zM166 294h1v2h-1zM167 293h1v2h-1zM168 293h1v2h-1zM169 294h1v2h-1zM170 292h1v3h-1zM171 292h1v2h-1zM172 292h1v2h-1zM173 292h1v1h-1zM174 292h1v2h-1zM175 293h1v2h-1zM176 291h1v3h-1zM177 291h1v1h-1zM178 291h1v2h-1zM179 292h1v2h-1zM180 293h1v2h-1zM181 293h1v2h-1zM182 292h1v2h-1zM183 292h1v1h-1zM184 290h1v3h-1zM185 291h1v4h-1zM186 293h1v2h-1zM187 292h1v2h-1zM188 292h1v2h-1zM189 292h1v2h-1zM190 291h1v2h-1zM191 291h1v2h-1zM192 292h1v2h-1zM193 293h1v1h-1zM194 293h1v2h-1zM195 293h1v2h-1zM196 293h1v2h-1zM197 292h1v2h-1zM198 292h1v1h-1zM199 292h1v1h-1zM200 292h1v2h-1zM201 293h1v2h-1zM202 293h1v2h-1zM203 293h1v1h-1zM204 293h1v2h-1zM205 291h1v3h-1zM206 291h1v4h-1zM207 291h1v4h-1zM208 291h1v2h-1zM209 291h1v3h-1zM210 293h1v2h-1zM211 293h1v2h-1zM212 292h1v2h-1zM213 292h1v3h-1zM214 292h1v3h-1zM215 291h1v2h-1zM216 291h1v2h-1zM217 292h1v2h-1zM218 291h1v2h-1zM219 291h1v4h-1zM220 292h1v3h-1zM221 292h1v2h-1zM222 291h1v3h-1zM223 290h1v2h-1zM224 290h1v4h-1zM225 293h1v3h-1zM226 294h1v2h-1zM227 293h1v2h-1zM228 293h1v1h-1zM229 293h1v3h-1zM230 293h1v3h-1zM231 292h1v2h-1zM232 292h1v2h-1zM233 292h1v2h-1zM234 292h1v2h-1zM235 293h1v3h-1zM236 292h1v4h-1zM237 291h1v1h-1zM238 291h1v4h-1zM239 293h1v2h-1zM240 293h1v2h-1zM241 291h1v4h-1zM242 291h1v4h-1zM243 292h1v3h-1zM244 292h1v2h-1zM245 291h1v2h-1zM246 291h1v3h-1zM247 293h1v2h-1zM248 294h1v2h-1zM249 294h1v2h-1zM250 293h1v2h-1zM251 293h1v2h-1zM252 293h1v2h-1zM253 292h1v3h-1zM254 292h1v2h-1zM255 293h1v2h-1zM256 292h1v2h-1zM257 291h1v2h-1zM258 291h1v2h-1zM259 291h1v2h-1zM260 291h1v4h-1zM261 293h1v2h-1zM262 291h1v3h-1zM263 291h1v4h-1zM264 294h1v2h-1zM265 291h1v4h-1zM266 291h1v4h-1zM267 291h1v4h-1zM268 291h1v3h-1zM269 293h1v2h-1zM270 293h1v1h-1zM271 293h1v1h-1zM272 291h1v3h-1zM273 291h1v1h-1zM274 291h1v3h-1zM275 293h1v2h-1zM276 293h1v2h-1zM277 292h1v2h-1zM278 292h1v2h-1zM279 292h1v2h-1zM280 292h1v2h-1zM281 292h1v4h-1zM282 292h1v4h-1zM283 292h1v2h-1zM284 293h1v2h-1zM285 292h1v3h-1zM286 292h1v3h-1zM287 291h1v4h-1zM288 291h1v4h-1zM289 293h1v2h-1zM290 291h1v3h-1zM291 291h1v4h-1zM292 292h1v3h-1zM293 292h1v3h-1zM294 292h1v3h-1zM295 292h1v2h-1zM296 293h1v1h-1zM297 292h1v2h-1zM298 292h1v2h-1zM299 293h1v2h-1zM300 293h1v2h-1zM301 290h1v4h-1zM302 289h1v3h-1zM303 291h1v3h-1zM304 293h1v2h-1zM305 292h1v2h-1zM306 291h1v2h-1zM307 292h1v4h-1zM308 293h1v3h-1zM309 293h1v4h-1zM310 293h1v4h-1zM311 293h1v2h-1zM312 292h1v3h-1zM313 291h1v2h-1zM314 291h1v4h-1zM315 294h1v2h-1zM316 293h1v2h-1zM317 291h1v3h-1zM318 291h1v3h-1zM319 291h1v3h-1zM320 291h1v2h-1zM321 292h1v3h-1zM322 291h1v4h-1zM323 291h1v4h-1zM324 294h1v2h-1zM325 294h1v2h-1zM326 294h1v2h-1zM327 293h1v2h-1zM328 293h1v2h-1zM329 292h1v3h-1zM330 291h1v2h-1zM331 291h1v4h-1zM332 293h1v2h-1zM333 293h1v2h-1zM334 291h1v4h-1zM335 291h1v2h-1zM336 292h1v2h-1zM337 291h1v3h-1zM338 291h1v2h-1zM339 292h1v3h-1zM340 294h1v1h-1zM341 294h1v2h-1zM342 293h1v3h-1zM343 292h1v2h-1zM344 291h1v2h-1zM345 291h1v3h-1zM346 292h1v2h-1zM347 292h1v2h-1zM348 292h1v2h-1zM349 292h1v2h-1zM350 292h1v2h-1zM351 293h1v2h-1zM352 292h1v3h-1zM353 290h1v3h-1zM354 290h1v4h-1zM355 293h1v2h-1zM356 292h1v2h-1zM357 292h1v3h-1zM358 293h1v2h-1zM359 293h1v2h-1zM360 294h1v1h-1zM361 294h1v3h-1zM362 295h1v2h-1zM363 295h1v2h-1zM364 292h1v4h-1zM365 292h1v4h-1zM366 293h1v3h-1zM367 291h1v3h-1zM368 291h1v2h-1zM369 292h1v2h-1zM370 292h1v2h-1zM371 292h1v2h-1zM372 292h1v2h-1zM373 292h1v2h-1zM374 293h1v2h-1zM375 291h1v3h-1zM376 291h1v2h-1zM377 292h1v2h-1zM378 292h1v1h-1zM379 292h1v1h-1zM380 291h1v2h-1zM381 291h1v3h-1zM382 293h1v2h-1zM383 291h1v3h-1zM384 291h1v2h-1zM385 290h1v3h-1zM386 290h1v4h-1zM387 291h1v3h-1zM388 291h1v4h-1zM389 291h1v4h-1zM390 291h1v2h-1zM391 292h1v2h-1zM392 292h1v2h-1zM393 292h1v1h-1zM394 292h1v2h-1zM395 291h1v2h-1zM396 291h1v2h-1zM397 292h1v2h-1zM398 292h1v2h-1zM399 292h1v1h-1zM400 292h1v2h-1zM401 292h1v2h-1zM402 292h1v2h-1zM403 291h1v2h-1zM404 289h1v3h-1zM405 290h1v4h-1zM406 293h1v2h-1zM407 293h1v2h-1zM408 293h1v2h-1zM409 294h1v1h-1zM410 292h1v3h-1zM411 292h1v2h-1zM412 291h1v3h-1zM413 291h1v2h-1zM414 292h1v1h-1zM415 291h1v2h-1zM416 291h1v3h-1zM417 291h1v3h-1zM418 290h1v2h-1zM419 291h1v4h-1zM420 293h1v2h-1zM421 293h1v2h-1zM422 291h1v4h-1zM423 291h1v4h-1zM424 294h1v2h-1zM425 295h1v2h-1zM426 293h1v3h-1zM427 293h1v2h-1zM428 293h1v2h-1zM429 293h1v2h-1zM430 291h1v3h-1zM431 291h1v3h-1zM432 292h1v2h-1zM433 292h1v2h-1zM434 293h1v1h-1zM435 293h1v2h-1zM436 292h1v3h-1zM437 292h1v1h-1zM438 292h1v2h-1zM439 292h1v2h-1zM440 293h1v1h-1zM441 290h1v4h-1zM442 290h1v2h-1zM443 291h1v3h-1zM444 293h1v2h-1zM445 293h1v3h-1zM446 292h1v4h-1zM447 291h1v1h-1zM448 291h1v2h-1zM449 291h1v3h-1zM450 293h1v2h-1zM451 294h1v2h-1zM452 293h1v2h-1zM453 292h1v2h-1zM454 292h1v2h-1zM455 292h1v2h-1zM456 292h1v2h-1zM457 292h1v1h-1zM458 292h1v2h-1zM459 292h1v2h-1zM460 291h1v3h-1zM461 291h1v3h-1zM462 291h1v3h-1zM463 291h1v2h-1zM464 292h1v4h-1zM465 292h1v4h-1zM466 292h1v4h-1zM467 293h1v3h-1zM468 293h1v2h-1zM469 291h1v4h-1zM470 291h1v4h-1zM471 294h1v1h-1zM472 293h1v2h-1zM473 292h1v2h-1zM474 292h1v3h-1zM475 292h1v3h-1zM476 292h1v2h-1zM477 292h1v2h-1zM478 293h1v2h-1zM479 293h1v2h-1zM480 294h1v1h-1zM481 294h1v2h-1zM482 294h1v2h-1zM483 294h1v2h-1zM484 292h1v4h-1zM485 291h1v1h-1zM486 291h1v4h-1zM487 291h1v4h-1zM488 291h1v3h-1zM489 292h1v2h-1zM490 292h1v1h-1zM491 291h1v2h-1zM492 290h1v2h-1zM493 290h1v4h-1zM494 292h1v2h-1zM495 292h1v2h-1zM496 292h1v2h-1zM497 293h1v2h-1zM498 292h1v2h-1zM499 292h1v2h-1zM500 291h1v3h-1zM501 291h1v2h-1zM502 290h1v3h-1zM503 290h1v3h-1zM504 292h1v4h-1zM505 292h1v4h-1zM506 291h1v2h-1zM507 291h1v3h-1zM508 291h1v3h-1zM509 290h1v2h-1zM510 290h1v3h-1zM511 292h1v2h-1z" fill="#f0f"/><rect x="75" y="285" width="1" height="6" fill="#f0f"/><rect x="513" y="224" width="1" height="131" fill="#c8c8c8"/><rect x="61" y="355" width="1" height="1" fill="#00f"/><rect x="72" y="355" width="1" height="1" fill="#000088"/><rect x="82" y="355" width="1" height="1" fill="#000088"/><rect x="93" y="355" width="1" height="1" fill="#000088"/><rect x="103" y="355" width="1" height="1" fill="#000088"/><rect x="113" y="355" width="1" height="1" fill="#00f"/><rect x="124" y="355" width="1" height="1" fill="#000088"/><rect x="134" y="355" width="1" height="1" fill="#000088"/><rect x="145" y="355" width="1" height="1" fill="#000088"/><rect x="155" y="355" width="1" height="1" fill="#000088"/><rect x="165" y="355" width="1" height="1" fill="#00f"/><rect x="176" y="355" width="1" height="1" fill="#000088"/><rect x="186" y="355" width="1" height="1" fill="#000088"/><rect x="196" y="355" width="1" height="1" fill="#000088"/><rect x="207" y="355" width="1" height="1" fill="#000088"/><rect x="217" y="355" width="1" height="1" fill="#00f"/><rect x="228" y="355" width="1" height="1" fill="#000088"/><rect x="238" y="355" width="1" height="1" fill="#000088"/><rect x="248" y="355" width="1" height="1" fill="#000088"/><rect x="259" y="355" width="1" height="1" fill="#000088"/><rect x="269" y="355" width="1" height="1" fill="#00f"/><rect x="280" y="355" width="1" height="1" fill="#000088"/><rect x="290" y="355" width="1" height="1" fill="#000088"/><rect x="300" y="355" width="1" height="1" fill="#000088"/><rect x="311" y="355" width="1" height="1" fill="#000088"/><rect x="321" y="355" width="1" height="1" fill="#00f"/><rect x="331" y="355" width="1" height="1" fill="#000088"/><rect x="342" y="355" width="1" height="1" fill="#000088"/><rect x="352" y="355" width="1" height="1" fill="#000088"/><rect x="363" y="355" width="1" height="1" fill="#000088"/><rect x="373" y="355" width="1" height="1" fill="#00f"/><rect x="383" y="355" width="1" height="1" fill="#000088"/><rect x="394" y="355" width="1" height="1" fill="#000088"/><rect x="404" y="355" width="1" height="1" fill="#000088"/><rect x="415" y="355" width="1" height="1" fill="#000088"/><rect x="425" y="355" width="1" height="1" fill="#00f"/><rect x="435" y="355" width="1" height="1" fill="#000088"/><rect x="446" y="355" width="1" height="1" fill="#000088"/><rect x="456" y="355" width="1" height="1" fill="#000088"/><rect x="466" y="355" width="1" height="1" fill="#000088"/><rect x="477" y="355" width="1" height="1" fill="#00f"/><rect x="487" y="355" width="1" height="1" fill="#000088"/><rect x="498" y="355" width="1" height="1" fill="#000088"/><rect x="508" y="355" width="1" height="1" fill="#000088"/><rect x="518" y="355" width="1" height="1" fill="#000088"/><rect x="529" y="355" width="1" height="1" fill="#00f"/></svg>
<div class="ax r" style="left:24px;width:31px;top:66px">500</div><div class="ax r" style="left:24px;width:31px;top:93px">400</div><div class="ax r" style="left:24px;width:31px;top:119px">300</div><div class="ax r" style="left:24px;width:31px;top:145px">200</div><div class="ax r" style="left:24px;width:31px;top:171px">100</div><div class="ax" style="left:532.7px;top:66px">16</div><div class="ax" style="left:532.7px;top:83px">14</div><div class="ax" style="left:532.7px;top:99px">12</div><div class="ax" style="left:532.7px;top:116px">10</div><div class="ax" style="left:532.7px;top:132px">8</div><div class="ax" style="left:532.7px;top:148px">6</div><div class="ax" style="left:532.7px;top:165px">4</div><div class="ax" style="left:532.7px;top:181px">2</div><div class="ax r" style="left:24px;width:31px;top:216px">20</div><div class="ax" style="left:531.7px;top:216px">20</div><div class="ax r" style="left:24px;width:31px;top:243px">16</div><div class="ax" style="left:531.7px;top:243px">16</div><div class="ax r" style="left:24px;width:31px;top:269px">12</div><div class="ax" style="left:531.7px;top:269px">12</div><div class="ax r" style="left:24px;width:31px;top:295px">8</div><div class="ax" style="left:531.7px;top:295px">8</div><div class="ax r" style="left:24px;width:31px;top:321px">4</div><div class="ax" style="left:531.7px;top:321px">4</div><div class="ax c" style="left:43.4px;width:40px;top:206px">0.0</div><div class="ax c" style="left:43.4px;width:40px;top:356px">0.0</div><div class="ax c" style="left:95.3px;width:40px;top:206px">0.5</div><div class="ax c" style="left:95.3px;width:40px;top:356px">0.5</div><div class="ax c" style="left:147.2px;width:40px;top:206px">1.0</div><div class="ax c" style="left:147.2px;width:40px;top:356px">1.0</div><div class="ax c" style="left:199.2px;width:40px;top:206px">1.5</div><div class="ax c" style="left:199.2px;width:40px;top:356px">1.5</div><div class="ax c" style="left:251.1px;width:40px;top:206px">2.0</div><div class="ax c" style="left:251.1px;width:40px;top:356px">2.0</div><div class="ax c" style="left:303.0px;width:40px;top:206px">2.5</div><div class="ax c" style="left:303.0px;width:40px;top:356px">2.5</div><div class="ax c" style="left:354.9px;width:40px;top:206px">3.0</div><div class="ax c" style="left:354.9px;width:40px;top:356px">3.0</div><div class="ax c" style="left:406.9px;width:40px;top:206px">3.5</div><div class="ax c" style="left:406.9px;width:40px;top:356px">3.5</div><div class="ax c" style="left:458.8px;width:40px;top:206px">4.0</div><div class="ax c" style="left:458.8px;width:40px;top:356px">4.0</div><div class="ax c" style="left:510.7px;width:40px;top:206px">4.5</div><div class="ax c" style="left:510.7px;width:40px;top:356px">4.5</div>
<div class="btn" style="left:562px;top:59px"><span class="j">開始</span></div><div class="btn" style="left:654px;top:59px"><div class="foc"></div><span class="j">終了(<u>X</u>)</span></div><div class="gb" style="left:561px;top:93px;width:163px;height:74px"></div><div class="abs" style="left:568px;top:93px;width:62px;height:1px;background:#fff"></div><div class="t bl" style="left:570px;top:85px;"><span class="k" style="margin-right:-13.0px">ディスク</span><span class="j">情報</span></div><div class="t " style="left:568px;top:100px;"><span class="k" style="margin-right:-9.7px">タイプ</span>:</div><div class="t " style="left:568px;top:115px;">ID:</div><div class="t " style="left:568px;top:130px;"><span class="j">日付</span>:</div><div class="t " style="left:568px;top:145px;letter-spacing:-0.62px;word-spacing:0.00px;">Label:</div><div class="t nv" style="left:617.5px;top:100px;letter-spacing:-0.12px;word-spacing:0.00px;">DVD-R</div><div class="t nv" style="left:617.5px;top:115px;letter-spacing:-0.81px;word-spacing:0.00px;">UTJR001001</div><div class="t nv" style="left:617.5px;top:130px;letter-spacing:-0.71px;word-spacing:0.97px;">17 December 2004</div><div class="t nv" style="left:617.5px;top:145px;"><span class="h">ｻｴ･ﾆｹﾈ</span>(Data</div><div class="gb" style="left:561px;top:173px;width:163px;height:167px"></div><div class="abs" style="left:568px;top:173px;width:45px;height:1px;background:#fff"></div><div class="t bl" style="left:570px;top:165.5px;letter-spacing:-0.34px;word-spacing:0.00px;">Settings</div><div class="t " style="left:568px;top:187px;"><span class="j">転送速度</span></div><div class="t " style="left:568px;top:213px;"><span class="j">開始</span></div><div class="t " style="left:568px;top:234.5px;"><span class="j">終了位置</span></div><div class="ed" style="left:631px;top:185px;width:82px;height:20px"></div><div class="t " style="left:634px;top:187.5px;"><span class="j">最大</span></div><div class="dd" style="left:696px;top:187px"><svg width="15" height="16" viewBox="0 0 15 16"><path d="M4 6.5 L7.5 10 L11 6.5" fill="none" stroke="#7a7a7a" stroke-width="2"/></svg></div><div class="ed" style="left:631px;top:209px;width:70px;height:18px"></div><div class="t " style="left:633.5px;top:210.5px;letter-spacing:-0.6px;word-spacing:2.69px;">0000 <span class="n" style="transform:scaleX(0.82);margin-right:-3.02px">MB</span></div><div class="ed" style="left:631px;top:232px;width:70px;height:18px"></div><div class="t " style="left:633.5px;top:234px;letter-spacing:-0.6px;word-spacing:2.69px;">4451 <span class="n" style="transform:scaleX(0.82);margin-right:-3.02px">MB</span></div><div class="cb" style="left:569px;top:255px;border-color:#008080"><svg width="11" height="11" viewBox="0 0 11 11"><path d="M0 0H5L0 5Z" fill="#d0d0d0"/><path d="M2 5 L4.5 7.5 L9 2.5" fill="none" stroke="#008000" stroke-width="2"/></svg></div><div class="t " style="left:585px;top:254.5px;letter-spacing:-0.46px;word-spacing:0.73px;">Show C1/PIE</div><div class="cb" style="left:569px;top:272px;border-color:#008080"><svg width="11" height="11" viewBox="0 0 11 11"><path d="M0 0H5L0 5Z" fill="#d0d0d0"/><path d="M2 5 L4.5 7.5 L9 2.5" fill="none" stroke="#008000" stroke-width="2"/></svg></div><div class="t " style="left:585px;top:271.5px;letter-spacing:-0.44px;word-spacing:0.71px;">Show C2/PIF</div><div class="cb" style="left:569px;top:288px;border-color:#008080"><svg width="11" height="11" viewBox="0 0 11 11"><path d="M0 0H5L0 5Z" fill="#d0d0d0"/><path d="M2 5 L4.5 7.5 L9 2.5" fill="none" stroke="#008000" stroke-width="2"/></svg></div><div class="t " style="left:585px;top:287.5px;letter-spacing:-0.26px;word-spacing:0.52px;">Show Jitter</div><div class="cb" style="left:569px;top:305px;border-color:#008080"><svg width="11" height="11" viewBox="0 0 11 11"><path d="M0 0H5L0 5Z" fill="#d0d0d0"/><path d="M2 5 L4.5 7.5 L9 2.5" fill="none" stroke="#008000" stroke-width="2"/></svg></div><div class="t " style="left:585px;top:304.5px;letter-spacing:-0.80px;word-spacing:1.07px;">Show Read Speed</div><div class="cb" style="left:569px;top:322px;border-color:#c4c4c4"><svg width="11" height="11" viewBox="0 0 11 11"><path d="M0 0H5L0 5Z" fill="#d0d0d0"/><path d="M2 5 L4.5 7.5 L9 2.5" fill="none" stroke="#b4b4b4" stroke-width="2"/></svg></div><div class="t " style="left:585px;top:321.5px;color:#a8a8a8;">Show Write Speed</div><div class="gb" style="left:561px;top:344px;width:163px;height:24px"></div><div class="t " style="left:568.5px;top:349px;"><span class="j">品質</span><span class="k" style="margin-right:-9.7px">スコア</span>:</div><div class="v " style="left:586.5px;width:120px;top:349px;">93</div><div class="gb" style="left:561px;top:374px;width:163px;height:63px"></div><div class="t " style="left:568.5px;top:381px;"><span class="j">進行状況</span>:</div><div class="t " style="left:568.5px;top:399.5px;"><span class="k" style="margin-right:-16.2px">ポジション</span>:</div><div class="t " style="left:568.5px;top:418px;"><span class="j">速度</span>:</div><div class="v " style="left:587.4px;width:120px;top:381px;letter-spacing:-0.6px;word-spacing:1.40px;">100 <span class="n" style="transform:scaleX(0.6);margin-right:-4.03px">%</span></div><div class="v " style="left:586.4px;width:120px;top:399.5px;letter-spacing:-0.6px;word-spacing:3.19px;">4450 <span class="n" style="transform:scaleX(0.82);margin-right:-3.02px">MB</span></div><div class="v " style="left:587.6px;width:120px;top:418px;letter-spacing:-0.89px;word-spacing:1.16px;">8.29 X</div><div class="abs" style="left:723px;top:90px;width:1px;height:349px;background:#fff"></div><div class="gb" style="left:18px;top:374px;width:169px;height:63px;border-radius:0"></div><div class="abs" style="left:36px;top:374px;width:54px;height:1px;background:#fff"></div><div class="abs" style="left:28px;top:371px;width:8px;height:8px;box-sizing:border-box;border:1px solid #000;background:#0ff"></div><div class="t " style="left:41px;top:367px;letter-spacing:-0.69px;word-spacing:0.95px;">PI Errors</div><div class="t " style="left:27px;top:382px;"><span class="j">平均</span>:</div><div class="t " style="left:27px;top:400px;"><span class="j">最大</span>:</div><div class="t " style="left:27px;top:418px;"><span class="j">合計</span> :</div><div class="v " style="left:54.8px;width:120px;top:382px;letter-spacing:-0.51px;word-spacing:0.00px;">25.70</div><div class="v " style="left:54.8px;width:120px;top:400px;">219</div><div class="v " style="left:54.5px;width:120px;top:418px;letter-spacing:-0.81px;word-spacing:0.00px;">376816</div><div class="gb" style="left:198px;top:374px;width:170px;height:63px;border-radius:0"></div><div class="abs" style="left:216px;top:374px;width:63px;height:1px;background:#fff"></div><div class="abs" style="left:208px;top:371px;width:8px;height:8px;box-sizing:border-box;border:1px solid #000;background:#ff0"></div><div class="t " style="left:220px;top:367px;letter-spacing:-0.40px;word-spacing:0.67px;">PI Failures</div><div class="t " style="left:209px;top:382px;"><span class="j">平均</span>:</div><div class="t " style="left:209px;top:400px;"><span class="j">最大</span>:</div><div class="t " style="left:209px;top:418px;"><span class="j">合計</span> :</div><div class="v " style="left:235.9px;width:120px;top:382px;">0.33</div><div class="v " style="left:235.9px;width:120px;top:400px;">12</div><div class="v " style="left:235.9px;width:120px;top:418px;">4151</div><div class="gb" style="left:379px;top:374px;width:170px;height:47px;border-radius:0"></div><div class="abs" style="left:397px;top:374px;width:31px;height:1px;background:#fff"></div><div class="abs" style="left:389px;top:371px;width:8px;height:8px;box-sizing:border-box;border:1px solid #000;background:#f0f"></div><div class="t " style="left:402.5px;top:367px;">Jitter</div><div class="t " style="left:389px;top:381.5px;"><span class="j">平均</span>:</div><div class="t " style="left:389px;top:400px;"><span class="j">最大</span>:</div><div class="v " style="left:417.4px;width:120px;top:381.5px;letter-spacing:-0.6px;word-spacing:1.06px;">9.11 <span class="n" style="transform:scaleX(0.6);margin-right:-4.03px">%</span></div><div class="v " style="left:417.4px;width:120px;top:400px;letter-spacing:-0.6px;word-spacing:0.17px;">12.5 <span class="n" style="transform:scaleX(0.6);margin-right:-4.03px">%</span></div><div class="t " style="left:389px;top:422.5px;letter-spacing:-0.60px;word-spacing:0.86px;">PO Failures:</div><div class="v " style="left:416.5px;width:120px;top:422.5px;">0</div>
</body></html>
